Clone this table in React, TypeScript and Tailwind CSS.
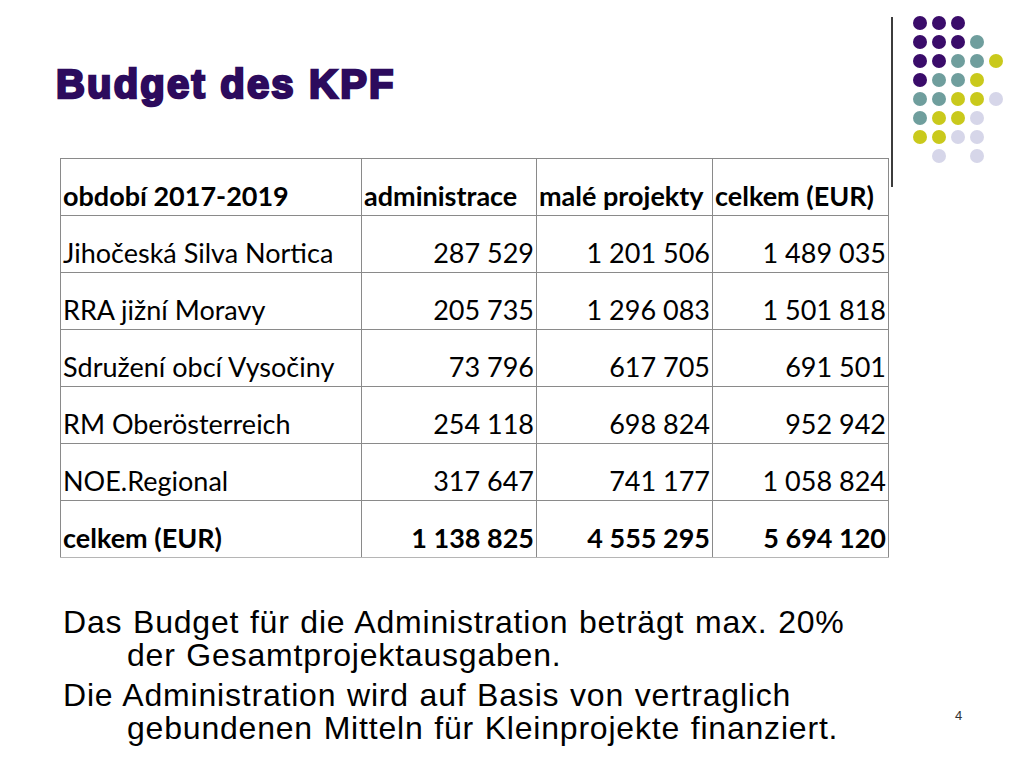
const P = "bg-[#3a0c6a]";
const T = "bg-[#6f9e9d]";
const Y = "bg-[#c9c91c]";
const L = "bg-[#d6d6e9]";

const dots: (string | null)[][] = [
  [P, P, P, null, null],
  [P, P, P, T, null],
  [P, P, T, T, Y],
  [P, T, T, Y, null],
  [T, T, Y, Y, L],
  [T, Y, Y, L, null],
  [Y, Y, L, L, null],
  [null, L, null, L, null],
];

const rows = [
  ["Jihočeská Silva Nortica", "287 529", "1 201 506", "1 489 035"],
  ["RRA jižní Moravy", "205 735", "1 296 083", "1 501 818"],
  ["Sdružení obcí Vysočiny", "73 796", "617 705", "691 501"],
  ["RM Oberösterreich", "254 118", "698 824", "952 942"],
  ["NOE.Regional", "317 647", "741 177", "1 058 824"],
];

const cell = "h-[57px] border border-[#8a8a8a] px-[2px] pb-[6px] align-bottom leading-none";

export default function App() {
  return (
    <div className="relative w-[1024px] h-[768px] bg-white overflow-hidden">
      {/* decorative dots and divider */}
      <div className="absolute left-[891px] top-[17px] w-[2px] h-[170px] bg-[#3c3c3c]" />
      <div className="absolute left-[913px] top-[16px] grid grid-cols-5 gap-x-[5px] gap-y-[5px]">
        {dots.flat().map((c, i) => (
          <div key={i} className={`w-[14px] h-[14px] rounded-full ${c ?? ""}`} />
        ))}
      </div>

      <div className="flex flex-col pl-[56px] pt-[62px]">
        <h1
          className="text-[40px] leading-[44px] font-bold text-[#2c0b5d] tracking-[2.2px] [-webkit-text-stroke:2.5px_#2c0b5d]"
          style={{ fontFamily: '"Liberation Sans", Arial, sans-serif' }}
        >
          Budget des KPF
        </h1>

        <table
          className="mt-[52px] ml-[4px] w-[828px] border-collapse text-[27px] text-black table-fixed"
          style={{ fontFamily: 'Lato, "Noto Sans", sans-serif' }}
        >
          <colgroup>
            <col className="w-[301px]" />
            <col className="w-[175px]" />
            <col className="w-[176px]" />
            <col className="w-[176px]" />
          </colgroup>
          <thead>
            <tr className="font-bold">
              <td className={`${cell} text-left`}>období 2017-2019</td>
              <td className={`${cell} text-left`}>administrace</td>
              <td className={`${cell} text-left whitespace-nowrap`}>malé projekty</td>
              <td className={`${cell} text-left`}>celkem (EUR)</td>
            </tr>
          </thead>
          <tbody>
            {rows.map((r) => (
              <tr key={r[0]}>
                <td className={`${cell} text-left`}>{r[0]}</td>
                <td className={`${cell} text-right`}>{r[1]}</td>
                <td className={`${cell} text-right`}>{r[2]}</td>
                <td className={`${cell} text-right`}>{r[3]}</td>
              </tr>
            ))}
            <tr className="font-bold">
              <td className={`${cell} text-left border-b-[#b5b5b5]`}>celkem (EUR)</td>
              <td className={`${cell} text-right border-b-[#b5b5b5]`}>1 138 825</td>
              <td className={`${cell} text-right border-b-[#b5b5b5]`}>4 555 295</td>
              <td className={`${cell} text-right border-b-[#b5b5b5]`}>5 694 120</td>
            </tr>
          </tbody>
        </table>

        <div
          className="mt-[48px] ml-[7px] w-[805px] flex flex-col gap-[7px] text-[32px] leading-[33px] tracking-[0.8px] [word-spacing:1px] text-black"
          style={{ fontFamily: '"Liberation Sans", Arial, sans-serif' }}
        >
          <p className="pl-[64px] -indent-[64px]">
            Das Budget für die Administration beträgt max. 20% der Gesamtprojektausgaben.
          </p>
          <p className="pl-[64px] -indent-[64px]">
            Die Administration wird auf Basis von vertraglich gebundenen Mitteln für Kleinprojekte finanziert.
          </p>
        </div>
      </div>

      <div
        className="absolute left-[955px] top-[706px] text-[13px] text-[#333]"
        style={{ fontFamily: '"Liberation Sans", Arial, sans-serif' }}
      >
        4
      </div>
    </div>
  );
}
